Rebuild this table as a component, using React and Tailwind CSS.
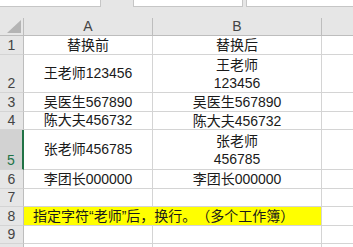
import React from 'react';

const rows = [
  { n: 1, h: 'h-[19px]', a: '替换前', b: ['替换后'] },
  { n: 2, h: 'h-[38px]', a: '王老师123456', b: ['王老师', '123456'] },
  { n: 3, h: 'h-[19px]', a: '吴医生567890', b: ['吴医生567890'] },
  { n: 4, h: 'h-[18px]', a: '陈大夫456732', b: ['陈大夫456732'] },
  { n: 5, h: 'h-[40px]', a: '张老师456785', b: ['张老师', '456785'], sel: true },
  { n: 6, h: 'h-[19px]', a: '李团长000000', b: ['李团长000000'] },
  { n: 7, h: 'h-[18px]' },
  { n: 8, h: 'h-[19px]', note: '指定字符“老师”后，换行。（多个工作簿）' },
  { n: 9, h: 'h-[18px]' },
  { n: 10, h: 'h-[18px]', hidden: true },
];

function RowHead({ n, sel, hidden }) {
  // selected row gets the darker header and the green edge
  return (
    <div
      className={
        'flex items-end justify-center border-b border-[#d4d4d4] leading-[17px] ' +
        (sel
          ? 'bg-[#d2d2d2] text-[#217346] border-r-2 border-r-[#217346]'
          : 'bg-[#e6e6e6] text-[#444] border-r border-r-[#bdbdbd]')
      }
    >
      {hidden ? null : n}
    </div>
  );
}

export default function App() {
  return (
    <div
      className="w-[353px] h-[247px] overflow-hidden bg-white text-[14px] text-[#1a1a1a] [text-spacing-trim:space-all]"
      style={{ fontFamily: '"Liberation Sans", "Noto Sans CJK SC", sans-serif' }}
    >
      {/* formula bar remains */}
      <div className="flex h-[18px] bg-[#e6e6e6]">
        <div className="w-[101px] h-[7px] bg-white border-r border-b border-[#c6c6c6]" />
        <div className="w-[32px]" />
        <div className="w-[110px] h-[7px] bg-white border-x border-b border-[#c6c6c6]" />
        <div className="w-[3px]" />
        <div className="flex-1 h-[7px] bg-white border-l border-b border-[#c6c6c6]" />
      </div>

      <div className="grid grid-cols-[24px_129px_169px_1fr]">
        {/* column headers */}
        <div className="h-[18px] bg-[#e6e6e6] border-r border-b border-[#bdbdbd] flex items-end justify-end pr-[2px] pb-[2px]">
          <svg width="14" height="13" viewBox="0 0 14 13">
            <polygon points="14,0 14,13 0,13" fill="#b4b4b4" />
          </svg>
        </div>
        <div className="h-[18px] bg-[#e6e6e6] border-r border-b border-[#bdbdbd] text-[#444] flex items-end justify-center leading-[17px]">A</div>
        <div className="h-[18px] bg-[#e6e6e6] border-r border-b border-[#bdbdbd] text-[#444] flex items-end justify-center leading-[17px]">B</div>
        <div className="h-[18px] bg-[#e6e6e6] border-b border-[#bdbdbd]" />

        {rows.map((r) => (
          <React.Fragment key={r.n}>
            <div className={r.h + ' grid'}>
              <RowHead n={r.n} sel={r.sel} hidden={r.hidden} />
            </div>
            {r.note ? (
              <div className={r.h + ' col-span-2 bg-[#ffff00] border-r border-b border-[#d4d4d4] flex items-center pl-[9px] leading-[17px] whitespace-nowrap'}>
                {r.note}
              </div>
            ) : (
              <>
                <div className={r.h + ' border-r border-b border-[#d4d4d4] flex items-center justify-center leading-[17px]'}>
                  {r.a}
                </div>
                <div className={r.h + ' border-r border-b border-[#d4d4d4] flex flex-col items-center justify-center leading-[18px]'}>
                  {(r.b || []).map((t) => (
                    <span key={t}>{t}</span>
                  ))}
                </div>
              </>
            )}
            <div className={r.h + ' border-b border-[#d4d4d4]'} />
          </React.Fragment>
        ))}
      </div>
    </div>
  );
}
